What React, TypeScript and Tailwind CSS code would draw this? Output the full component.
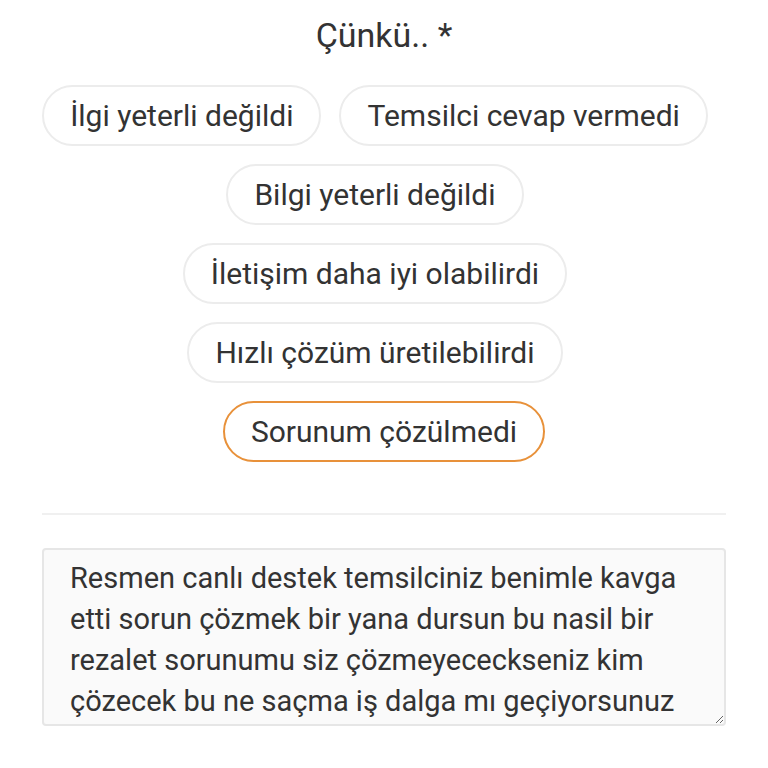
import { useState } from "react";

const REASONS = [
  "İlgi yeterli değildi",
  "Temsilci cevap vermedi",
  "Bilgi yeterli değildi",
  "İletişim daha iyi olabilirdi",
  "Hızlı çözüm üretilebilirdi",
  "Sorunum çözülmedi",
];

const COMMENT =
  "Resmen canlı destek temsilciniz benimle kavga etti sorun çözmek bir yana dursun bu nasil bir rezalet sorunumu siz çözmeyececkseniz kim çözecek bu ne saçma iş dalga mı geçiyorsunuz";

export default function App() {
  const [selected, setSelected] = useState("Sorunum çözülmedi");

  return (
    <div className="min-h-[768px] w-[768px] bg-white px-[42px] pt-[12px] font-['Roboto','Liberation_Sans',sans-serif] text-[#333]">
      {/* Başlık */}
      <h2 className="text-center text-[34px] leading-[46px] text-[#333]">Çünkü.. *</h2>

      {/* Seçenekler */}
      <div className="mt-[27px] flex flex-wrap justify-center gap-y-[18px]">
        {REASONS.map((r) => (
          <button
            key={r}
            onClick={() => setSelected(r)}
            className={`mr-[18px] h-[61px] rounded-full border-2 bg-white px-[26px] text-[30px] text-[#333] last:mr-0 ${
              selected === r ? "border-[#e8913a]" : "border-[#ececec]"
            }`}
          >
            {r}
          </button>
        ))}
      </div>

      <div className="mt-[51px] h-[2px] bg-[#f0f0f0]" />

      {/* Yorum */}
      <textarea
        defaultValue={COMMENT}
        className="mt-[33px] block h-[178px] w-full resize-y overflow-hidden rounded-[4px] border-2 border-[#e6e6e6] bg-[#fafafa] px-[26px] pt-[8px] text-[29px] leading-[41px] text-[#333] outline-none"
      />
    </div>
  );
}
